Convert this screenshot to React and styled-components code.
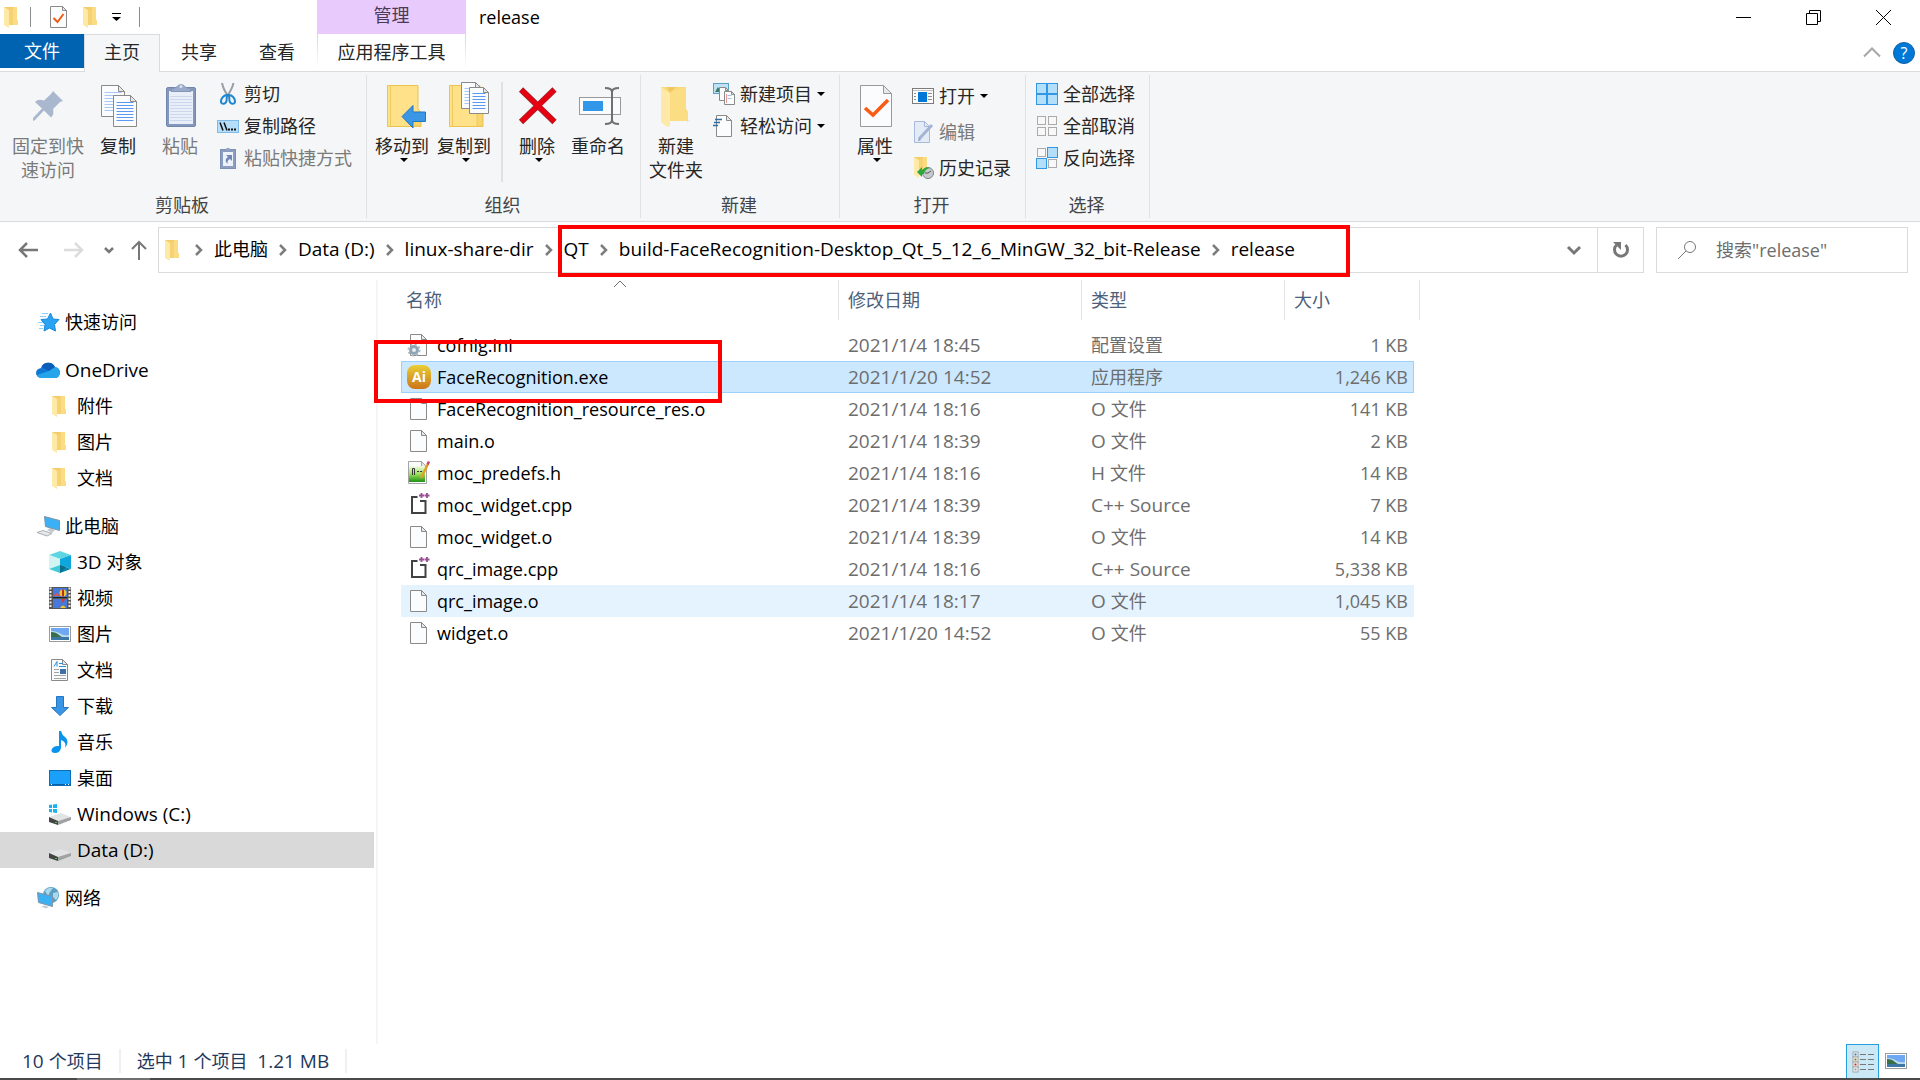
import React from 'react';
import styled, { createGlobalStyle, css } from 'styled-components';

const theme = {
  colors: {
    text: '#000000',
    ribbonText: '#262626',
    disabled: '#7a7a7a',
    muted: '#6d6d6d',
    header: '#4c607a',
    status: '#1e395b',
    ribbon: '#f5f6f7',
    line: '#dadbdc',
    accent: '#0063b1',
    mark: '#ff0000',
  },
  size: '18px',
  latin: '19px',
};

const GlobalStyle = createGlobalStyle`
  * { box-sizing: border-box; }
  body {
    margin: 0;
    background: #fff;
    color: ${theme.colors.text};
    font: ${theme.size}/24px 'Open Sans', 'Noto Sans CJK SC', sans-serif;
  }
  button, input {
    font: inherit;
    color: inherit;
    border: 0;
    padding: 0;
    background: none;
  }
  svg { display: block; overflow: visible; flex: none; }
`;

const Window = styled.div`
  position: relative;
  display: flex;
  flex-direction: column;
  min-height: 100vh;
`;

const Latin = styled.span`
  font-size: ${theme.latin};
`;

const TitleBar = styled.header`
  display: flex;
  height: 34px;
`;

const QuickAccess = styled.div`
  display: flex;
  align-items: center;
  width: 317px;
  padding-left: 4px;
`;

const QuickButton = styled.button`
  display: flex;
  justify-content: center;
  width: ${({ $width }) => $width}px;
`;

const QuickLine = styled.span`
  width: 1px;
  height: 20px;
  margin-left: ${({ $gap }) => $gap || 0}px;
  background: #8c8c8c;
`;

const ContextTitle = styled.div`
  width: 149px;
  padding-top: 3px;
  background: #e9cafc;
  color: #4a3a55;
  text-align: center;
`;

const WindowTitle = styled.h1`
  flex: 1;
  margin: 0;
  padding: 5px 0 0 13px;
  font-size: ${theme.size};
  font-weight: 400;
`;

const WindowButtons = styled.div`
  display: flex;
  padding-right: 2px;
`;

const WindowButton = styled.button`
  display: flex;
  align-items: center;
  justify-content: center;
  width: 70px;
`;

const TabRow = styled.div`
  display: flex;
  height: 38px;
  border-bottom: 1px solid ${theme.colors.line};
`;

const FileTab = styled.button`
  width: 84px;
  height: 34px;
  background: ${theme.colors.accent};
  color: #fff;
`;

const Tab = styled.button`
  width: 78px;
  height: 34px;
  border: 1px solid transparent;
  border-bottom: 0;
  color: ${theme.colors.ribbonText};
  ${({ $active }) => $active && css`
    width: 76px;
    height: 38px;
    padding-bottom: 4px;
    border-color: ${theme.colors.line};
    background: ${theme.colors.ribbon};
  `}
`;

const ContextTab = styled(Tab)`
  width: 149px;
  height: 34px;
  margin-left: 1px;
  padding-top: 2px;
  border-width: 0 1px;
  border-style: solid;
  border-image: linear-gradient(#d4d4d4, #fff) 1;
`;

const TabTools = styled.div`
  display: flex;
  align-items: center;
  gap: 13px;
  margin-left: auto;
  padding-right: 5px;
`;

const Ribbon = styled.section`
  display: flex;
  height: 150px;
  border-bottom: 1px solid ${theme.colors.line};
  background: ${theme.colors.ribbon};
`;

const Group = styled.div`
  display: flex;
  flex-direction: column;
  justify-content: space-between;
  width: ${({ $width }) => $width}px;
  margin: 3px 0;
  border-right: 1px solid #e0e1e3;
`;

const GroupBody = styled.div`
  display: flex;
  padding-left: ${({ $pad }) => $pad || 5}px;
`;

const GroupName = styled.div`
  height: 25px;
  padding-right: 2px;
  color: #444;
  text-align: center;
`;

const BigButton = styled.button`
  display: flex;
  flex-direction: column;
  align-items: center;
  width: ${({ $width }) => $width}px;
  padding-top: 7px;
  color: ${({ disabled }) => (disabled ? theme.colors.disabled : theme.colors.ribbonText)};
  white-space: nowrap;
`;

const BigLabel = styled.span`
  margin-top: 4px;
`;

const BigCaret = styled.span`
  padding-left: 4px;
`;

const InnerLine = styled.span`
  width: 2px;
  height: 100px;
  margin: 7px 6px 0;
  background: #e0e1e3;
`;

const SmallColumn = styled.div`
  display: flex;
  flex-direction: column;
  padding-top: 3px;
  margin-left: ${({ $gap }) => $gap || 0}px;
`;

const SmallButton = styled.button`
  display: flex;
  align-items: center;
  gap: 5px;
  height: ${({ $height }) => $height || 32}px;
  color: ${({ disabled }) => (disabled ? theme.colors.disabled : theme.colors.ribbonText)};
  white-space: nowrap;
`;

const NavRow = styled.div`
  display: flex;
  height: 58px;
  padding: 5px 12px 7px 0;
`;

const NavButtons = styled.div`
  display: flex;
  align-items: center;
  width: 158px;
  padding-left: 5px;
`;

const NavButton = styled.button`
  display: flex;
  flex: none;
  justify-content: center;
  width: ${({ $width }) => $width}px;
`;

const AddressBar = styled.div`
  display: flex;
  flex: 1;
  min-width: 0;
  border: 1px solid ${theme.colors.line};
`;

const Crumbs = styled.nav`
  display: flex;
  flex: 1;
  align-items: center;
  min-width: 0;
  padding-left: 6px;
`;

const Crumb = styled.a`
  margin: 0 11px 2px;
  color: inherit;
  text-decoration: none;
  white-space: nowrap;
`;

const CrumbFolder = styled.span`
  margin-right: 16px;
`;

const AddressButton = styled.button`
  display: flex;
  align-items: center;
  justify-content: center;
  width: 46px;
  border-left: ${({ $line }) => ($line ? `1px solid ${theme.colors.line}` : '0')};
`;

const SearchBox = styled.label`
  display: flex;
  align-items: center;
  gap: 20px;
  width: 252px;
  margin-left: 12px;
  padding: 0 10px 0 21px;
  border: 1px solid ${theme.colors.line};
`;

const SearchInput = styled.input`
  width: 100%;
  min-width: 0;
  height: 28px;
  outline: 0;
  &::placeholder { color: ${theme.colors.muted}; opacity: 1; }
`;

const Body = styled.div`
  display: flex;
  flex: 1;
`;

const Sidebar = styled.nav`
  width: 378px;
  padding: 24px 2px 0 0;
  border-right: 2px solid #f5f5f5;
`;

const TreeItem = styled.a`
  display: flex;
  align-items: center;
  gap: 5px;
  height: 36px;
  margin-top: ${({ $spaced }) => ($spaced ? 12 : 0)}px;
  padding-left: ${({ $root }) => ($root ? 36 : 48)}px;
  background: ${({ $selected }) => ($selected ? '#d9d9d9' : 'transparent')};
  color: inherit;
  text-decoration: none;
`;

const Files = styled.main`
  flex: 1;
  padding-left: 23px;
`;

const Table = styled.table`
  width: 1019px;
  border-collapse: separate;
  border-spacing: 0;
  table-layout: fixed;
`;

const Th = styled.th`
  width: ${({ $width }) => $width}px;
  height: 49px;
  padding: 0 0 9px;
  color: ${theme.colors.header};
  font-weight: 400;
  text-align: left;
`;

const ThLabel = styled.div`
  position: relative;
  height: 40px;
  padding: 8px 0 0 ${({ $first }) => ($first ? 5 : 9)}px;
  border-left: ${({ $first }) => ($first ? '0' : '1px solid #e5e5e5')};
`;

const ThEnd = styled.div`
  height: 40px;
  border-right: 1px solid #e5e5e5;
`;

const SortMark = styled.span`
  position: absolute;
  top: 1px;
  left: 50%;
  transform: translateX(-50%);
`;

const rowColors = {
  selected: ['#cce8ff', '#99d1ff'],
  hover: ['#e5f3ff', '#e5f3ff'],
  plain: ['transparent', 'transparent'],
};

const Row = styled.tr`
  color: ${theme.colors.muted};
  td {
    background: ${({ $state }) => rowColors[$state][0]};
    border: 0 solid ${({ $state }) => rowColors[$state][1]};
    border-width: 1px 0;
  }
  td:first-child { border-left-width: 1px; }
  td:last-child { border-right-width: 1px; }
`;

const Td = styled.td`
  height: 32px;
  padding: 0 ${({ $right }) => ($right ? 5 : 0)}px 0 10px;
  line-height: 28px;
  text-align: ${({ $right }) => ($right ? 'right' : 'left')};
  white-space: nowrap;
`;

const FileName = styled.div`
  display: flex;
  align-items: center;
  gap: 6px;
  margin-left: -5px;
  color: ${theme.colors.text};
`;

const StatusBar = styled.footer`
  display: flex;
  align-items: center;
  height: 34px;
  padding: 0 8px 0 22px;
  color: ${theme.colors.status};
`;

const StatusText = styled.span`
  padding-right: 16px;
  margin-right: 16px;
  border-right: 2px solid #f0f0f0;
  white-space: pre;
`;

const ViewButtons = styled.div`
  display: flex;
  align-self: stretch;
  margin-left: auto;
`;

const ViewButton = styled.button`
  display: flex;
  align-items: center;
  justify-content: center;
  width: 33px;
  border: ${({ $active }) => ($active ? '1px solid #26a0da' : '0')};
  border-bottom: 0;
  background: ${({ $active }) => ($active ? '#cbe8f6' : 'none')};
`;

const TaskbarEdge = styled.div`
  height: 2px;
  background: linear-gradient(90deg, #4a4a4a 77px, #707070 77px, #707070 150px, #4a4a4a 150px);
`;

const MarkFrame = styled.div`
  position: absolute;
  left: ${({ $left }) => $left}px;
  top: ${({ $top }) => $top}px;
  width: ${({ $width }) => $width}px;
  height: ${({ $height }) => $height}px;
  border: 4px solid ${theme.colors.mark};
  pointer-events: none;
`;

/* Latin runs are set one pixel larger than the Chinese ones beside them */
const Mixed = ({ children }) => children
  .split(/([\u4e00-\u9fff]+)/)
  .filter(Boolean)
  .map((part, i) => (/[\u4e00-\u9fff]/.test(part) ? part : <Latin key={i}>{part}</Latin>));

const Svg = ({ w = 24, h = w, children }) => (
  <svg width={w} height={h} viewBox={`0 0 ${w} ${h}`} fill="none" aria-hidden="true">{children}</svg>
);

const Caret = () => (
  <Svg w={8} h={4}><path d="M0 0h8L4 4z" fill="#000" /></Svg>
);

const lines = (x1, x2, y, count, step) => Array.from({ length: count }, (_, i) => `M${x1} ${y + i * step}H${x2}`).join('');

const Sheet = ({ x, y, w, h, fold = 5, stroke = '#8a8a8a', line, step = 3, fill = '#fbfcfd' }) => (
  <g>
    <path
      d={`M${x} ${y}H${x + w - fold}L${x + w} ${y + fold}V${y + h}H${x}z`}
      fill={fill}
      stroke={stroke}
    />
    {line && <path d={lines(x + 3, x + w - 3, y + fold + 1, Math.floor((h - fold - 2) / step), step)} stroke={line} />}
    <path d={`M${x + w - fold} ${y}v${fold}h${fold}z`} fill="#e6e8ea" stroke={stroke} />
  </g>
);

const FolderShape = () => (
  <>
    <path d="M0 0H13V13L14 14V18H4z" fill="#f3cd6b" />
    <path d="M4 3L13 0V18H4z" fill="#f5d374" />
    <path d="M0 0L5 3V21L0 18z" fill="#ffe9a6" />
    <path d="M9 0h4v13l1 1v4H9z" fill="#fbdc83" />
  </>
);

const FolderIcon = ({ w = 14 }) => (
  <Svg w={w} h={22}><g transform={`translate(${w === 14 ? 0 : 4} 1)`}><FolderShape /></g></Svg>
);

const CheckDoc = () => (
  <Svg w={17} h={22}>
    <Sheet x={0.5} y={0.5} w={16} h={21} fold={4} />
    <path d="M3.5 12l4 4 6-8" stroke="#f25a13" strokeWidth="2" />
  </Svg>
);

const PinIcon = () => (
  <Svg w={48}>
    <path d="M29 9L39 19L36 20L29 27Q30.500 32 27 35.500L20 28.500L11 38L9 39V36L18 26.500L11 20Q14 16.500 20 18.500L27 12z" fill="#a9b8cf" />
  </Svg>
);

const CopyIcon = () => (
  <Svg w={48}>
    <Sheet x={7.5} y={3.5} w={23} h={31} fold={6} line="#a9c8f3" />
    <Sheet x={19.5} y={13.5} w={23} h={31} fold={6} line="#5b98ef" />
  </Svg>
);

const PasteIcon = () => (
  <Svg w={48}>
    <rect x="10.500" y="5.500" width="29" height="39" rx="1.500" fill="#8597bb" stroke="#7286ae" />
    <path d="M13 9h24v33H13z" fill="#e9eff9" />
    <path d={lines(14, 36, 14.5, 9, 3)} stroke="#ccd8ec" />
    <path d="M15 9.500c0-3 4-3.500 6-4.500 1-3 7-3 8 0 2 1 6 1.500 6 4.500z" fill="#9aaaca" stroke="#8395ba" />
    <circle cx="25" cy="4.500" r="1.500" fill="#d9e1f0" />
  </Svg>
);

const CutIcon = () => (
  <Svg w={22}>
    <path d="M5 0c1 5 3 9 6.500 13.500M16.500 0C15.500 5 13 9 10 13.500" stroke="#9a9fa5" strokeWidth="2" />
    <path d="M10 12c-3 0-6 3-6 6.500 0 3 4.500 3 5.500-.5zM12 12c3 0 6 3 6 6.500 0 3-4.500 3-5.500-.5z" stroke="#1f87cf" strokeWidth="2" />
  </Svg>
);

const PathIcon = () => (
  <Svg w={22}>
    <rect x=".5" y="5.500" width="21" height="12" fill="#b5defa" stroke="#7fbbe6" />
    <path d="M3 7.500l3 8M7 7.500l3 8" stroke="#111" strokeWidth="1.500" />
    <path d="M11 14.500h2m1 0h2m1 0h2" stroke="#111" strokeWidth="2" />
  </Svg>
);

const ShortcutIcon = () => (
  <Svg w={22}>
    <rect x="3.500" y="2.500" width="15" height="19" fill="#8d9dc0" stroke="#7c8fb5" />
    <path d="M6 5h10v14H6z" fill="#edf2fa" />
    <path d="M7 4l2-1.500a2.500 2.500 0 0 1 4 0L15 4z" fill="#9aaaca" stroke="#8395ba" />
    <path d="M9 8h6v6l-2-2q-3 1-2.500 5Q6.500 13 11 10z" fill="#6f87b4" />
  </Svg>
);

const BigFolder = () => (
  <>
    <path d="M9.500 3.500H40V27l3 3v14.500H9.500z" fill="#ffe18a" stroke="#ecc34c" />
    <path d="M12.500 4v40M37 30h5.500v14H37z" fill="#f8d56d" stroke="#edca5f" />
  </>
);

const MoveToIcon = () => (
  <Svg w={48}>
    <BigFolder />
    <path d="M24 34.500L35 23.500V30H47.500V39.500H35V46z" fill="#3a97e6" stroke="#2277c2" />
  </Svg>
);

const CopyToIcon = () => (
  <Svg w={48}>
    <BigFolder />
    <Sheet x={21.5} y={0.5} w={19} h={26} line="#a9c8f3" />
    <Sheet x={29.5} y={5.5} w={19} h={26} line="#5b98ef" />
  </Svg>
);

const DeleteIcon = () => (
  <Svg w={48}>
    <path d="M8 7.500L41.500 40M41.500 7.500L8 40" stroke="#a81f28" strokeWidth="6" />
    <path d="M8.500 8L41 39.500M41 8L8.500 39.500" stroke="#e80010" strokeWidth="4.500" />
  </Svg>
);

const RenameIcon = () => (
  <Svg w={48}>
    <rect x="5.500" y="15.500" width="41" height="17" fill="#fafbfc" stroke="#999" />
    <rect x="9" y="19" width="20" height="10" fill="#3297e8" />
    <path d="M31 6q7 0 7 4v28q0 4-7 4M45 6q-7 0-7 4v28q0 4 7 4" stroke="#707070" strokeWidth="2" />
  </Svg>
);

const NewFolderIcon = () => (
  <Svg w={48}>
    <path d="M35 39l4-1-4 2z" fill="#d9d9d9" />
    <path d="M9 5h25v22l2 3v9H18z" fill="#f9d978" />
    <path d="M18 10L34 5v22l2 3v9H18z" fill="#fbdd83" />
    <path d="M18 11l6-6h-9z" fill="#efc863" />
    <path d="M9 5l9 6v33l-3 1-6-5z" fill="#ffe9a8" />
  </Svg>
);

const NewItemIcon = () => (
  <Svg w={22}>
    <rect x=".5" y=".5" width="15" height="10" fill="#bfe3f5" stroke="#5c9fc4" />
    <path d="M2 9l3-5 3 5z" fill="#3c7a6c" />
    <Sheet x={6.5} y={4.5} w={9} h={13} fold={3} />
    <Sheet x={11.5} y={8.5} w={10} h={13} fold={3} line="#9dc4ee" />
    <path d="M13.500 11v9" stroke="#ee9a9a" />
  </Svg>
);

const EasyAccessIcon = () => (
  <Svg w={22}>
    <Sheet x={3.5} y={0.5} w={15} h={21} />
    <path d="M2 4.500h7M1 7.500h6M0 10.500h5" stroke="#2f6ea5" strokeWidth="1.500" />
  </Svg>
);

const PropertiesIcon = () => (
  <Svg w={48}>
    <Sheet x={9.5} y={3.5} w={31} h={41} fold={8} stroke="#999" />
    <path d="M14 26l8 7L37 18" stroke="#fa5c14" strokeWidth="3.500" />
  </Svg>
);

const OpenIcon = () => (
  <Svg w={22}>
    <rect x=".5" y="3.500" width="21" height="15" fill="#fdfdfd" stroke="#7c7c7c" />
    <path d="M1 5.500h20" stroke="#c3c3c3" />
    <rect x="6" y="7" width="9" height="10" fill="#0078d7" />
    <path d="M2 8.500h2M2 11.500h2M2 14.500h2M16 8.500h4M16 11.500h4M16 14.500h4" stroke="#8e8e8e" />
  </Svg>
);

const EditIcon = () => (
  <Svg w={22}>
    <Sheet x={2.5} y={0.5} w={15} h={21} stroke="#a9b9dc" fill="#e4ebf8" />
    <path d="M7 18L20 4" stroke="#a4b4d4" strokeWidth="3" />
    <path d="M6 20l3-1-2-2z" fill="#8c9dc0" />
  </Svg>
);

const HistoryIcon = () => (
  <Svg w={22}>
    <g transform="translate(2 0)"><FolderShape /></g>
    <circle cx="16" cy="16" r="5.500" fill="#c6cacc" stroke="#80868a" />
    <path d="M16 16l3-2M16 16h-3" stroke="#555" />
    <path d="M5 15l5-5v3q4-4 8-2-5 1-6 6h-2v3z" fill="#2fa83b" />
  </Svg>
);

const cells = [[0.5, 0.5], [11.5, 0.5], [0.5, 11.5], [11.5, 11.5]];
const SelectIcon = ({ picked }) => (
  <Svg w={22}>
    {cells.map(([x, y], i) => (picked[i]
      ? <rect key={i} x={x} y={y} width="10" height="10" fill="#b4dffb" stroke="#3298e6" />
      : <rect key={i} x={x + 1} y={y + 1} width="8" height="8" fill="#f8f8f8" stroke="#ababab" />))}
  </Svg>
);

const StarIcon = () => (
  <Svg>
    <path d="M14.500 3l2.500 6 6 .500-4.500 5 1 6.500-6-3-5.500 3 1-6.500L5 9.500l6.500-.5z" fill="#29a3f2" stroke="#1689dc" />
    <path d="M6 3.500h6M4 6.500h6M2 12.500h5M4 15.500h4M3 18.500h4" stroke="#8fd0f8" />
  </Svg>
);

const CloudIcon = () => (
  <Svg>
    <path d="M5 10a7.500 7.500 0 0 1 14-1q5 1 5 6-1 5-5 5H5q-5-1-5-5t5-5z" fill="#0f78d4" />
    <path d="M5.500 9a7.500 7.500 0 0 1 13.500 0L13 13z" fill="#0a5db8" />
    <path d="M13 13l6-4q5 1 5 6-1 5-5 5H5q-3 0-4-3z" fill="#27a5ea" />
  </Svg>
);

const Screen = ({ x = 0, y = 0 }) => (
  <path transform={`translate(${x} ${y})`} d="M0 0l15 4v10L1 10z" fill="#3cb0f5" stroke="#7f95a5" />
);

const PcIcon = () => (
  <Svg>
    <path d="M11 16l3-2 5 2-3 3z" fill="#c4ccd2" />
    <Screen x={8.5} y={2.5} />
    <path d="M1 18.500l6-2 9 3-5 2.500z" fill="#e5e9ec" stroke="#a9b0b6" />
  </Svg>
);

const CubeIcon = () => (
  <Svg>
    <path d="M1 5l11-4 11 4-11 4z" fill="#5ed6e2" />
    <path d="M1 5l11 4v6L1 19z" fill="#d2f4f2" />
    <path d="M12 9l11-4v14l-11-4z" fill="#0fa6dc" />
    <path d="M1 19l11-4v8z" fill="#41cbd9" />
    <path d="M12 15l11 4-11 4z" fill="#0a86ad" />
    <path d="M12 15l6 2.200-6 5.800z" fill="#0a6d8c" />
  </Svg>
);

const VideoIcon = () => (
  <Svg>
    <rect x="1" y="1" width="22" height="22" fill="#555" />
    <path d="M2.500 1.500v21M21.500 1.500v21" stroke="#eee" strokeWidth="2" strokeDasharray="2 1.500" />
    <rect x="5" y="2" width="14" height="9" fill="#4979d8" />
    <rect x="5" y="13" width="14" height="9" fill="#4979d8" />
    <path d="M6 10q1-4 4-2l2 2z" fill="#e05252" />
    <circle cx="15" cy="7" r="3.500" fill="#f0c62c" />
    <path d="M14 3.500h2v7h-2z" fill="#b83224" />
    <path d="M13 13h4l-2 4z" fill="#d93b2b" />
    <path d="M12 22q3-5 6 0z" fill="#f0c62c" />
    <path d="M5 11.500h14" stroke="#222" />
  </Svg>
);

const PictureIcon = () => (
  <Svg w={22}>
    <rect x=".5" y="3.500" width="21" height="15" fill="#fff" stroke="#9b9b9b" />
    <rect x="2" y="5" width="18" height="12" fill="#6fa8f2" />
    <path d="M2 8q6 0 9 2.500T20 12v5H2z" fill="#bcd9ee" />
    <path d="M2 9q5 0 8 3t7 2H2z" fill="#376f4b" />
    <path d="M2 14h18v3H2z" fill="#3d77a5" />
  </Svg>
);

const DocumentIcon = () => (
  <Svg>
    <Sheet x={3.5} y={1.5} w={16} h={21} />
    <path d="M6 8.500l3-5v5M11 5.500h4M11 8.500h7" stroke="#2490db" />
    <path d="M6 11.500h5M6 14.500h5M6 17.500h12M6 20.500h12" stroke="#a3a3a3" />
    <rect x="12" y="11" width="6" height="5" fill="#3b70a8" />
  </Svg>
);

const DownloadIcon = () => (
  <Svg><path d="M8.500 2.500h7v11h5L12 21.500 3.500 13.500h5z" fill="#3b95e5" stroke="#2378c6" /></Svg>
);

const MusicIcon = () => (
  <Svg>
    <path d="M11 1h2q1 4 4 6 5 4 0 11 2-6-4-8v8q-1 5-6 5-4 0-3.500-3Q5 15.500 11 16z" fill="#0a94ee" />
  </Svg>
);

const DesktopIcon = () => (
  <Svg>
    <rect x="1.500" y="4.500" width="21" height="15" fill="#1aa0fb" stroke="#0c6db8" />
    <path d="M2 18.500h20" stroke="#0b5f9f" />
    <path d="M3 18.500h1M17 18.500h1M20 18.500h1" stroke="#fff" />
  </Svg>
);

const DriveShape = () => (
  <g transform="translate(1 0)">
    <path d="M0 15l12-4 10 4-13 4z" fill="#e2e3e5" />
    <path d="M0 15l9 4v4l-9-3z" fill="#444" />
    <path d="M9 19l13-4v3L9 23z" fill="#9fa1a3" />
    <path d="M6 20h2v1H6z" fill="#2bd13e" />
  </g>
);

const DriveIcon = ({ windows }) => (
  <Svg>
    <DriveShape />
    {windows && <path d="M1 3l3-.5V6H1zM5 2.500L9 2v4H5zM1 7h3v3.500L1 10zM5 7h4v4l-4-.5z" fill="#18b4f0" />}
  </Svg>
);

const NetworkIcon = () => (
  <Svg>
    <circle cx="15" cy="9" r="8" fill="#5b9fc4" />
    <path d="M9 5q3-4 8-3l-3 4-2 4zM17 7l5-1q1 5-2 8l-3-3z" fill="#a9d9ea" />
    <Screen x={1.5} y={6.5} />
    <path d="M5 20.500l4-1 4 1.500-3 1.500z" fill="#c4ccd2" />
  </Svg>
);

const fileIcons = {
  blank: () => <Svg><Sheet x={3.5} y={1.5} w={16} h={21} /></Svg>,
  ini: () => (
    <Svg>
      <Sheet x={3.5} y={1.5} w={16} h={21} />
      <circle cx="7" cy="17" r="3.500" fill="#e9eef2" stroke="#8fa5b5" strokeWidth="3" />
      <circle cx="7" cy="17" r="5.500" stroke="#a9bac6" strokeWidth="2" strokeDasharray="2 2.300" />
    </Svg>
  ),
  exe: () => (
    <Svg>
      <defs>
        <linearGradient id="exe" x1="0" y1="0" x2="0" y2="1">
          <stop stopColor="#e9cf35" />
          <stop offset="1" stopColor="#cc7418" />
        </linearGradient>
      </defs>
      <rect width="24" height="24" rx="8" fill="url(#exe)" />
      <text x="12" y="17" fill="#fff" fontSize="14" fontWeight="700" textAnchor="middle">Ai</text>
    </Svg>
  ),
  header: () => (
    <Svg>
      <defs>
        <linearGradient id="header" x1="0" y1="0" x2="0" y2="1">
          <stop stopColor="#f4fbe9" />
          <stop offset=".5" stopColor="#9be05a" />
          <stop offset="1" stopColor="#1f8f17" />
        </linearGradient>
      </defs>
      <Sheet x={1.5} y={0.5} w={18} h={22} stroke="#a5a5a5" />
      <path d="M2 5h16v16H2z" fill="url(#header)" />
      <path d="M5.500 14V7.500h2V14M10 10.500h2m1 0h2" stroke="#333" />
      <path d="M14 17L21 3" stroke="#e0a02a" strokeWidth="2.500" />
      <path d="M20.500 3.500l1.500-3" stroke="#c0456a" strokeWidth="2.500" />
    </Svg>
  ),
  cpp: () => (
    <Svg>
      <path d="M10.500 4H5v16h13.500V8H13" stroke="#424242" strokeWidth="2" />
      <path d="M12 2.500h5M14.500 0v5M17.500 2.500h5M20 0v5" stroke="#9b4f96" strokeWidth="1.800" />
    </Svg>
  ),
};

const tree = [
  { name: '快速访问', icon: <StarIcon />, root: true },
  { name: 'OneDrive', icon: <CloudIcon />, root: true, spaced: true },
  { name: '附件', icon: <FolderIcon w={24} /> },
  { name: '图片', icon: <FolderIcon w={24} /> },
  { name: '文档', icon: <FolderIcon w={24} /> },
  { name: '此电脑', icon: <PcIcon />, root: true, spaced: true },
  { name: '3D 对象', icon: <CubeIcon /> },
  { name: '视频', icon: <VideoIcon /> },
  { name: '图片', icon: <Svg><g transform="translate(1 1)"><PictureIcon /></g></Svg> },
  { name: '文档', icon: <DocumentIcon /> },
  { name: '下载', icon: <DownloadIcon /> },
  { name: '音乐', icon: <MusicIcon /> },
  { name: '桌面', icon: <DesktopIcon /> },
  { name: 'Windows (C:)', icon: <DriveIcon windows /> },
  { name: 'Data (D:)', icon: <DriveIcon />, selected: true },
  { name: '网络', icon: <NetworkIcon />, root: true, spaced: true },
];

const files = [
  ['cofnig.ini', 'ini', '2021/1/4 18:45', '配置设置', '1 KB'],
  ['FaceRecognition.exe', 'exe', '2021/1/20 14:52', '应用程序', '1,246 KB', 'selected'],
  ['FaceRecognition_resource_res.o', 'blank', '2021/1/4 18:16', 'O 文件', '141 KB'],
  ['main.o', 'blank', '2021/1/4 18:39', 'O 文件', '2 KB'],
  ['moc_predefs.h', 'header', '2021/1/4 18:16', 'H 文件', '14 KB'],
  ['moc_widget.cpp', 'cpp', '2021/1/4 18:39', 'C++ Source', '7 KB'],
  ['moc_widget.o', 'blank', '2021/1/4 18:39', 'O 文件', '14 KB'],
  ['qrc_image.cpp', 'cpp', '2021/1/4 18:16', 'C++ Source', '5,338 KB'],
  ['qrc_image.o', 'blank', '2021/1/4 18:17', 'O 文件', '1,045 KB', 'hover'],
  ['widget.o', 'blank', '2021/1/20 14:52', 'O 文件', '55 KB'],
];

const crumbs = [
  '此电脑',
  'Data (D:)',
  'linux-share-dir',
  'QT',
  'build-FaceRecognition-Desktop_Qt_5_12_6_MinGW_32_bit-Release',
  'release',
];

const Big = ({ icon, width, label, caret, disabled }) => (
  <BigButton type="button" $width={width} disabled={disabled}>
    {icon}
    <BigLabel>
      {label.map((line, i) => <React.Fragment key={line}>{i > 0 && <br />}{line}</React.Fragment>)}
    </BigLabel>
    {caret && <BigCaret><Caret /></BigCaret>}
  </BigButton>
);

const Small = ({ icon, label, caret, disabled, height }) => (
  <SmallButton type="button" disabled={disabled} $height={height}>
    {icon}
    {label}
    {caret && <Caret />}
  </SmallButton>
);

const App = () => (
  <>
    <GlobalStyle />
    <Window>
      <TitleBar>
        <QuickAccess>
          <FolderIcon />
          <QuickLine $gap={12} />
          <QuickButton type="button" aria-label="属性" $width={55}><CheckDoc /></QuickButton>
          <QuickButton type="button" aria-label="新建文件夹" $width={8}><FolderIcon /></QuickButton>
          <QuickButton type="button" aria-label="自定义快速访问工具栏" $width={45}>
            <Svg w={9} h={8}><path d="M0 .5h9" stroke="#000" /><path d="M0 4h9L4.500 8z" fill="#000" /></Svg>
          </QuickButton>
          <QuickLine />
        </QuickAccess>
        <ContextTitle>管理</ContextTitle>
        <WindowTitle>release</WindowTitle>
        <WindowButtons>
          <WindowButton type="button" aria-label="最小化">
            <Svg w={15}><path d="M0 7.500h15" stroke="#000" /></Svg>
          </WindowButton>
          <WindowButton type="button" aria-label="还原">
            <Svg w={15}><path d="M.5 3.500h11v11H.5zM3.500 3V.5h11v11H12" stroke="#000" /></Svg>
          </WindowButton>
          <WindowButton type="button" aria-label="关闭">
            <Svg w={15}><path d="M0 0l15 15M15 0L0 15" stroke="#000" /></Svg>
          </WindowButton>
        </WindowButtons>
      </TitleBar>

      <TabRow>
        <FileTab type="button">文件</FileTab>
        <Tab type="button" $active>主页</Tab>
        <Tab type="button">共享</Tab>
        <Tab type="button">查看</Tab>
        <ContextTab type="button">应用程序工具</ContextTab>
        <TabTools>
          <Svg w={16} h={9}><path d="M0 8.500l8-8 8 8" stroke="#a6a6a6" strokeWidth="2" /></Svg>
          <Svg w={22}>
            <circle cx="11" cy="11" r="10.500" fill="#0078d7" stroke="#0b5fa5" />
            <text x="11" y="17" fill="#fff" fontSize="16" textAnchor="middle">?</text>
          </Svg>
        </TabTools>
      </TabRow>

      <Ribbon>
        <Group $width={367}>
          <GroupBody $pad={6}>
            <Big icon={<PinIcon />} width={84} label={['固定到快', '速访问']} disabled />
            <Big icon={<CopyIcon />} width={56} label={['复制']} />
            <Big icon={<PasteIcon />} width={68} label={['粘贴']} disabled />
            <SmallColumn $gap={3}>
              <Small icon={<CutIcon />} label="剪切" />
              <Small icon={<PathIcon />} label="复制路径" />
              <Small icon={<ShortcutIcon />} label="粘贴快捷方式" disabled />
            </SmallColumn>
          </GroupBody>
          <GroupName>剪贴板</GroupName>
        </Group>
        <Group $width={274}>
          <GroupBody $pad={4}>
            <Big icon={<MoveToIcon />} width={62} label={['移动到']} caret />
            <Big icon={<CopyToIcon />} width={62} label={['复制到']} caret />
            <InnerLine />
            <Big icon={<DeleteIcon />} width={56} label={['删除']} caret />
            <Big icon={<RenameIcon />} width={66} label={['重命名']} />
          </GroupBody>
          <GroupName>组织</GroupName>
        </Group>
        <Group $width={199}>
          <GroupBody>
            <Big icon={<NewFolderIcon />} width={60} label={['新建', '文件夹']} />
            <SmallColumn $gap={7}>
              <Small icon={<NewItemIcon />} label="新建项目" caret />
              <Small icon={<EasyAccessIcon />} label="轻松访问" caret />
            </SmallColumn>
          </GroupBody>
          <GroupName>新建</GroupName>
        </Group>
        <Group $width={186}>
          <GroupBody>
            <Big icon={<PropertiesIcon />} width={60} label={['属性']} caret />
            <SmallColumn $gap={7}>
              <Small icon={<OpenIcon />} label="打开" caret height={36} />
              <Small icon={<EditIcon />} label="编辑" disabled height={36} />
              <Small icon={<HistoryIcon />} label="历史记录" height={36} />
            </SmallColumn>
          </GroupBody>
          <GroupName>打开</GroupName>
        </Group>
        <Group $width={124}>
          <GroupBody $pad={10}>
            <SmallColumn>
              <Small icon={<SelectIcon picked={[1, 1, 1, 1]} />} label="全部选择" />
              <Small icon={<SelectIcon picked={[0, 0, 0, 0]} />} label="全部取消" />
              <Small icon={<SelectIcon picked={[0, 1, 1, 0]} />} label="反向选择" />
            </SmallColumn>
          </GroupBody>
          <GroupName>选择</GroupName>
        </Group>
      </Ribbon>

      <NavRow>
        <NavButtons>
          <NavButton type="button" aria-label="返回" $width={46}>
            <Svg w={20} h={16}><path d="M20 8H2M9 1L2 8l7 7" stroke="#777" strokeWidth="2.500" /></Svg>
          </NavButton>
          <NavButton type="button" aria-label="前进" $width={46}>
            <Svg w={20} h={16}><path d="M0 8h18M11 1l7 7-7 7" stroke="#dcdcdc" strokeWidth="2.500" /></Svg>
          </NavButton>
          <NavButton type="button" aria-label="最近浏览的位置" $width={23}>
            <Svg w={10} h={6}><path d="M1 1l4 4 4-4" stroke="#777" strokeWidth="2.500" /></Svg>
          </NavButton>
          <NavButton type="button" aria-label="向上" $width={37}>
            <Svg w={16} h={20}><path d="M8 20V2M1 9l7-7 7 7" stroke="#777" strokeWidth="2" /></Svg>
          </NavButton>
        </NavButtons>
        <AddressBar>
          <Crumbs>
            <CrumbFolder><FolderIcon /></CrumbFolder>
            {crumbs.map(name => (
              <React.Fragment key={name}>
                <Svg w={8} h={12}><path d="M1 1l5 5-5 5" stroke="#7d7d7d" strokeWidth="2.500" /></Svg>
                <Crumb href="#"><Mixed>{name}</Mixed></Crumb>
              </React.Fragment>
            ))}
          </Crumbs>
          <AddressButton type="button" aria-label="以前的位置">
            <Svg w={14} h={8}><path d="M1 1l6 6 6-6" stroke="#777" strokeWidth="3" /></Svg>
          </AddressButton>
          <AddressButton type="button" aria-label="刷新" $line>
            <Svg w={16}>
              <path d="M12.500 3a6.500 6.500 0 1 1-9 0" stroke="#777" strokeWidth="3" />
              <path d="M0 0h8v8z" fill="#777" />
            </Svg>
          </AddressButton>
        </AddressBar>
        <SearchBox>
          <Svg w={18}><circle cx="12" cy="6" r="5.500" stroke="#777" /><path d="M8 10l-8 8" stroke="#777" /></Svg>
          <SearchInput type="text" aria-label="搜索" placeholder={'搜索"release"'} />
        </SearchBox>
      </NavRow>

      <Body>
        <Sidebar>
          {tree.map(({ name, icon, root, spaced, selected }, i) => (
            <TreeItem href="#" key={i} $root={root} $spaced={spaced} $selected={selected}>
              {icon}
              <span><Mixed>{name}</Mixed></span>
            </TreeItem>
          ))}
        </Sidebar>
        <Files>
          <Table>
            <thead>
              <tr>
                <Th $width={437}>
                  <ThLabel $first>
                    名称
                    <SortMark><Svg w={12} h={6}><path d="M0 6l6-6 6 6" stroke="#6d6d6d" /></Svg></SortMark>
                  </ThLabel>
                </Th>
                <Th $width={243}><ThLabel>修改日期</ThLabel></Th>
                <Th $width={203}><ThLabel>类型</ThLabel></Th>
                <Th $width={130}><ThLabel>大小</ThLabel></Th>
                <Th $width={6}><ThEnd /></Th>
              </tr>
            </thead>
            <tbody>
              {files.map(([name, icon, date, type, size, state = 'plain']) => (
                <Row key={name} $state={state}>
                  <Td>
                    <FileName>
                      {fileIcons[icon]()}
                      {name}
                    </FileName>
                  </Td>
                  <Td><Latin>{date}</Latin></Td>
                  <Td><Mixed>{type}</Mixed></Td>
                  <Td $right>{size}</Td>
                </Row>
              ))}
            </tbody>
          </Table>
        </Files>
      </Body>

      <StatusBar>
        <StatusText><Mixed>10 个项目</Mixed></StatusText>
        <StatusText><Mixed>{'选中 1 个项目  1.21 MB'}</Mixed></StatusText>
        <ViewButtons>
          <ViewButton type="button" aria-label="详细信息" $active>
            <Svg w={22}>
              {['#2b78c2', '#8a7a1e', '#c22b1e', '#8aa0a8'].map((color, i) => (
                <g key={color}>
                  <rect x="1" y={1 + i * 5} width="5" height="5" fill="#fff" stroke="#a3a3a3" />
                  <rect x="2.500" y={2.5 + i * 5} width="2" height="2" fill={color} />
                  <path d={`M8 ${3.5 + i * 5}h6m2 0h6`} stroke="#777" />
                </g>
              ))}
            </Svg>
          </ViewButton>
          <ViewButton type="button" aria-label="大缩略图"><PictureIcon /></ViewButton>
        </ViewButtons>
      </StatusBar>
      <TaskbarEdge />

      <MarkFrame $left={558} $top={225} $width={792} $height={52} />
      <MarkFrame $left={374} $top={340} $width={348} $height={63} />
    </Window>
  </>
);

export default App;
